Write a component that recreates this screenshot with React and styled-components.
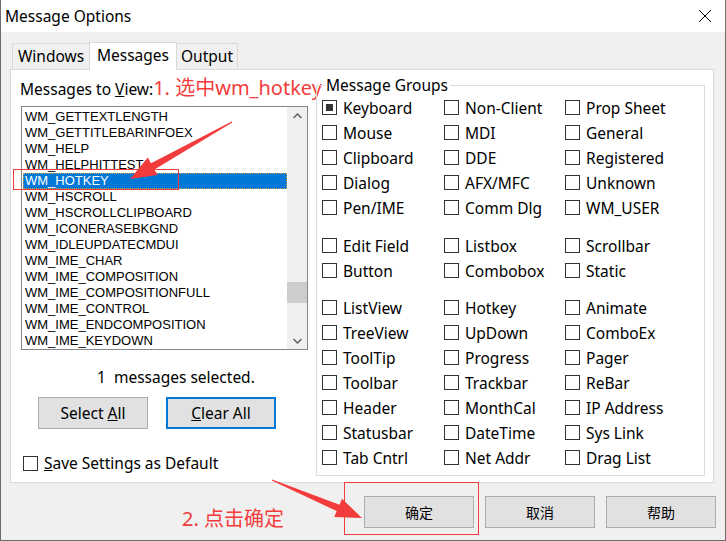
import React from "react";
import styled, { createGlobalStyle } from "styled-components";

const GlobalStyle = createGlobalStyle`
  body {
    margin: 0;
    font-family: "Noto Sans", "Noto Sans CJK SC", sans-serif;
  }
`;

const RED = "#f23c3c";

const Window = styled.div`
  position: relative;
  width: 726px;
  height: 541px;
  box-sizing: border-box;
  border: 1px solid #6d6d6d;
  border-top: none;
  background: #f0f0f0;
  display: flex;
  flex-direction: column;
  font-family: "Noto Sans", "Noto Sans CJK SC", sans-serif;
  font-size: 15.5px;
  color: #000;
`;

const TitleBar = styled.div`
  height: 32px;
  flex: none;
  background: #fff;
  display: flex;
  align-items: center;
  justify-content: space-between;
  padding: 0 13px 0 4px;
`;

const Body = styled.div`
  padding: 10px 0 0 9px;
`;

const TabRow = styled.div`
  display: flex;
  align-items: flex-end;
  height: 27px;
  padding-left: 2px;
`;

const Tab = styled.div`
  position: relative;
  z-index: ${p => (p.$active ? 1 : 0)};
  width: ${p => p.$w}px;
  height: ${p => (p.$active ? 28 : 26)}px;
  margin-bottom: ${p => (p.$active ? -1 : 0)}px;
  margin-left: ${p => (p.$first ? 0 : -1)}px;
  box-sizing: border-box;
  border: 1px solid #d9d9d9;
  border-bottom: none;
  background: ${p => (p.$active ? "#fff" : "#f0f0f0")};
  text-align: center;
  line-height: 25px;
`;

const Panel = styled.div`
  width: 704px;
  height: 414px;
  box-sizing: border-box;
  border: 1px solid #d9d9d9;
  background: #fff;
  display: flex;
`;

const LeftCol = styled.div`
  width: 295px;
  box-sizing: border-box;
  padding-left: 10px;
  display: flex;
  flex-direction: column;
`;

const ViewLabel = styled.div`
  margin: 8px 0 0 -1px;
  height: 20px;
  line-height: 20px;
  white-space: nowrap;
`;

const Note = styled.span`
  color: ${RED};
  font-size: 20px;
  line-height: 20px;
`;

const ListBox = styled.div`
  margin-top: 8px;
  width: 287px;
  height: 244px;
  box-sizing: border-box;
  border: 1px solid #828790;
  display: flex;
`;

const Items = styled.div`
  flex: 1;
  padding-top: 2px;
  font-family: "Liberation Sans", Arial, sans-serif;
  font-size: 13px;
`;

const Item = styled.div`
  height: 16px;
  line-height: 16px;
  margin-left: 1px;
  padding-left: 2px;
  box-sizing: border-box;
  background: ${p => (p.$selected ? "#0078d7" : "transparent")};
  color: ${p => (p.$selected ? "#fff" : "#000")};
  outline: ${p => (p.$selected ? "1px dotted #c9a25a" : "none")};
  outline-offset: -1px;
`;

const ScrollBar = styled.div`
  width: 20px;
  background: #f0f0f0;
  display: flex;
  flex-direction: column;
`;

const ScrollArrow = styled.div`
  height: 17px;
  display: flex;
  align-items: center;
  justify-content: center;
`;

const Track = styled.div`
  flex: 1;
`;

const Thumb = styled.div`
  margin-top: 158px;
  height: 21px;
  background: #cdcdcd;
`;

const Status = styled.div`
  margin-top: 17px;
  padding-left: 76px;
  line-height: 20px;
  white-space: pre;
`;

const ButtonRow = styled.div`
  margin-top: 10px;
  display: flex;
  gap: 18px;
  padding-left: 17px;
`;

const Button = styled.div`
  width: 110px;
  height: 32px;
  flex: none;
  box-sizing: border-box;
  background: #e1e1e1;
  border: ${p => (p.$focused ? "2px solid #0078d7" : "1px solid #adadad")};
  display: flex;
  align-items: center;
  justify-content: center;
  font-size: ${p => (p.$cjk ? 14 : 15.5)}px;
  font-family: ${p => (p.$cjk ? '"Noto Sans CJK SC", sans-serif' : "inherit")};
`;

const SaveRow = styled.div`
  margin-top: 24px;
  padding-left: 2px;
  display: flex;
  align-items: center;
  gap: 6px;
  height: 20px;
`;

const GroupBox = styled.fieldset`
  margin: 5px 0 0 10px;
  padding: 0 0 0 5px;
  width: 389px;
  height: 401px;
  box-sizing: border-box;
  border: 1px solid #dcdcdc;
  min-width: 0;
`;

const Legend = styled.legend`
  margin-left: 2px;
  padding: 0 2px;
  line-height: 20px;
`;

const CheckGrid = styled.div`
  display: grid;
  grid-template-columns: 122px 121px 1fr;
  grid-auto-rows: 25px;
  margin-top: ${p => p.$gap || 0}px;
`;

const CheckItem = styled.div`
  display: flex;
  align-items: center;
  gap: 6px;
  white-space: nowrap;
`;

const Box = styled.span`
  width: 15px;
  height: 15px;
  flex: none;
  box-sizing: border-box;
  border: 1px solid #333;
  background: #fff;
  display: flex;
  align-items: center;
  justify-content: center;

  &::after {
    content: "";
    width: 7px;
    height: 7px;
    background: ${p => (p.$checked ? "#333" : "transparent")};
  }
`;

const Footer = styled.div`
  display: flex;
  justify-content: flex-end;
  align-items: flex-start;
  gap: 11px;
  padding: 13px 9px 0 0;
`;

const FooterNote = styled.div`
  color: ${RED};
  font-size: 20px;
  line-height: 24px;
  margin: 11px 69px 0 0;
`;

const Overlay = styled.svg`
  position: absolute;
  left: -1px;
  top: 0;
  pointer-events: none;
`;

const messages = [
  "WM_GETTEXTLENGTH",
  "WM_GETTITLEBARINFOEX",
  "WM_HELP",
  "WM_HELPHITTEST",
  "WM_HOTKEY",
  "WM_HSCROLL",
  "WM_HSCROLLCLIPBOARD",
  "WM_ICONERASEBKGND",
  "WM_IDLEUPDATECMDUI",
  "WM_IME_CHAR",
  "WM_IME_COMPOSITION",
  "WM_IME_COMPOSITIONFULL",
  "WM_IME_CONTROL",
  "WM_IME_ENDCOMPOSITION",
  "WM_IME_KEYDOWN",
];

const groups = [
  ["Keyboard", "Non-Client", "Prop Sheet", "Mouse", "MDI", "General", "Clipboard", "DDE", "Registered",
    "Dialog", "AFX/MFC", "Unknown", "Pen/IME", "Comm Dlg", "WM_USER"],
  ["Edit Field", "Listbox", "Scrollbar", "Button", "Combobox", "Static"],
  ["ListView", "Hotkey", "Animate", "TreeView", "UpDown", "ComboEx", "ToolTip", "Progress", "Pager",
    "Toolbar", "Trackbar", "ReBar", "Header", "MonthCal", "IP Address", "Statusbar", "DateTime", "Sys Link",
    "Tab Cntrl", "Net Addr", "Drag List"],
];

const Chevron = ({ up }) => (
  <svg width="9" height="6" viewBox="0 0 9 6">
    <polyline points={up ? "0.5,5 4.5,1 8.5,5" : "0.5,1 4.5,5 8.5,1"} fill="none" stroke="#606060" strokeWidth="1.5" />
  </svg>
);

const App = () => {
  return (
    <>
      <GlobalStyle />
      <Window>
        <TitleBar>
          <span>Message Options</span>
          <svg width="14" height="14" viewBox="0 0 14 14">
            <path d="M1 1 L13 13 M13 1 L1 13" stroke="#000" strokeWidth="1" />
          </svg>
        </TitleBar>

        <Body>
          <TabRow>
            <Tab $first $w={78}>Windows</Tab>
            <Tab $active $w={88}>Messages</Tab>
            <Tab $w={62}>Output</Tab>
          </TabRow>

          <Panel>
            <LeftCol>
              <ViewLabel>
                Messages to <u>V</u>iew:<Note>1. 选中wm_hotkey</Note>
              </ViewLabel>
              <ListBox>
                <Items>
                  {messages.map(m => (
                    <Item key={m} $selected={m === "WM_HOTKEY"}>{m}</Item>
                  ))}
                </Items>
                <ScrollBar>
                  <ScrollArrow><Chevron up /></ScrollArrow>
                  <Track><Thumb /></Track>
                  <ScrollArrow><Chevron /></ScrollArrow>
                </ScrollBar>
              </ListBox>
              <Status>{"1  messages selected."}</Status>
              <ButtonRow>
                <Button><span>Select <u>A</u>ll</span></Button>
                <Button $focused><span><u>C</u>lear All</span></Button>
              </ButtonRow>
              <SaveRow>
                <Box />
                <span><u>S</u>ave Settings as Default</span>
              </SaveRow>
            </LeftCol>

            <GroupBox>
              <Legend>Message Groups</Legend>
              {groups.map((g, i) => (
                <CheckGrid key={i} $gap={i === 0 ? 0 : i === 1 ? 13 : 12}>
                  {g.map(name => (
                    <CheckItem key={name}>
                      <Box $checked={name === "Keyboard"} />
                      <span>{name}</span>
                    </CheckItem>
                  ))}
                </CheckGrid>
              ))}
            </GroupBox>
          </Panel>

          <Footer>
            <FooterNote>2. 点击确定</FooterNote>
            <Button $cjk>确定</Button>
            <Button $cjk>取消</Button>
            <Button $cjk>帮助</Button>
          </Footer>
        </Body>

        <Overlay width="726" height="541" viewBox="0 0 726 541">
          <rect x="13.5" y="169.5" width="165" height="20" fill="none" stroke={RED} strokeWidth="1" />
          <rect x="344.5" y="482.5" width="134" height="52" fill="none" stroke={RED} strokeWidth="1" />
          <polygon
            fill={RED}
            points="232.3,122.5 154.4,169.4 157.6,175.0 130,179 147.8,157.6 151.0,163.2 231.7,121.5"
          />
          <polygon
            fill={RED}
            points="272.2,479.4 339.5,504.7 342.0,498.7 362,518 334.2,517.1 336.7,511.1 271.8,480.6"
          />
        </Overlay>
      </Window>
    </>
  );
};

export default App;
